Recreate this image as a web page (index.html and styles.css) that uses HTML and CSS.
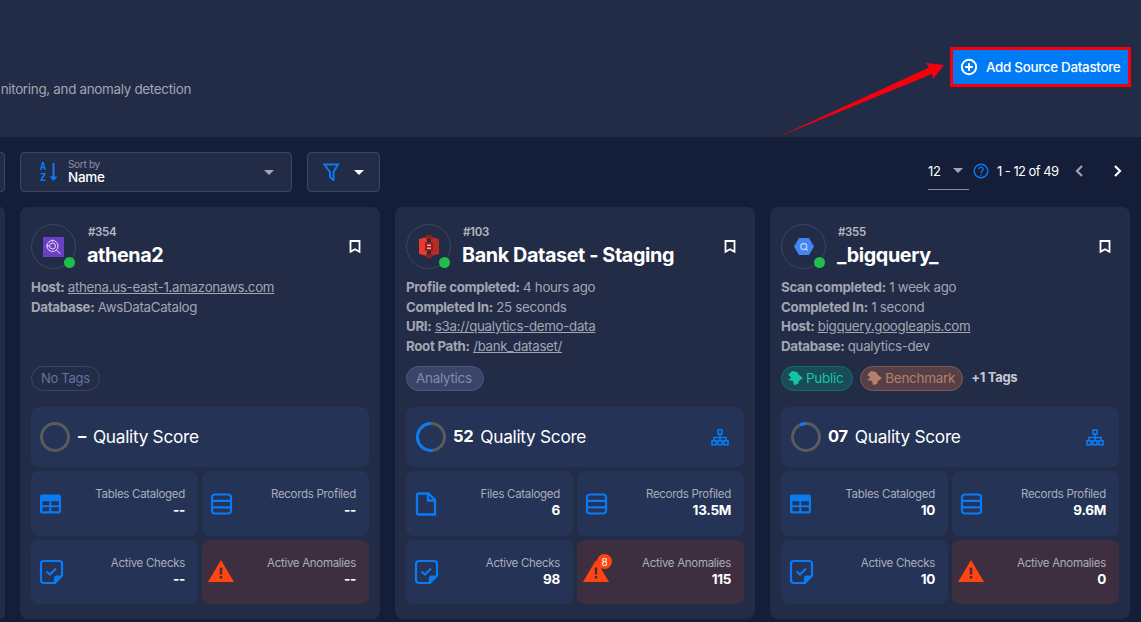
FILE: index.html
```html
<!DOCTYPE html>
<html>
  <head>
    <title>Source Datastores</title>
    <link rel="stylesheet" href="styles.css">
  </head>
  <body>
    <header class="top">
      <p class="intro">nitoring, and anomaly detection</p>
      <button class="add-btn">
        <svg width="18" height="18" viewBox="0 0 18 18" fill="none" stroke="#fff" stroke-width="2"><circle cx="9" cy="9" r="7.2"/><path d="M9 5.200v7.600M5.200 9h7.600"/></svg>
        Add Source Datastore
      </button>
    </header>

    <!-- annotation drawn on top of the screenshot -->
    <svg class="arrow" width="180" height="90" viewBox="770 55 180 90"><path d="M778 137L929 67.500L926 63L944 65L933 79L932 74Z" fill="#f5000b"/></svg>

    <section class="toolbar">
      <div class="stub"></div>
      <div class="sort">
        <svg width="22" height="22" viewBox="0 0 22 22">
          <text x="0" y="9" class="az">A</text>
          <text x="0" y="20" class="az">Z</text>
          <path d="M13.500 2v16" stroke="#0a7bf2" stroke-width="2"/>
          <path d="M9.500 15.500h8l-4 4.500z" fill="#0a7bf2"/>
        </svg>
        <div class="sort-text">
          <small>Sort by</small>
          <b>Name</b>
        </div>
        <i class="caret grey"></i>
      </div>
      <div class="filter">
        <svg width="18" height="18" viewBox="0 0 18 18" fill="none" stroke="#0a7bf2" stroke-width="2"><path d="M1.500 1.500h13.500L10.500 9v8L7 14V9z"/></svg>
        <i class="caret"></i>
      </div>
      <div class="pager">
        <div class="per-page"><span>12</span><i class="caret grey"></i></div>
        <svg class="help" width="16" height="16" viewBox="0 0 16 16" fill="none" stroke="#0a7bf2" stroke-width="1.400"><circle cx="8" cy="8" r="6.800"/><path d="M5.900 6.300a2.100 2.100 0 1 1 3.300 1.700C8.400 8.600 8 9 8 10M8 11.200v1.200"/></svg>
        <span class="range">1 - 12 of 49</span>
        <svg class="prev" width="10" height="14" viewBox="0 0 10 14" fill="none" stroke="#9ea3b0" stroke-width="2.200"><path d="M8 2L3 7l5 5"/></svg>
        <svg class="next" width="10" height="14" viewBox="0 0 10 14" fill="none" stroke="#fff" stroke-width="2.200"><path d="M2 2l5 5-5 5"/></svg>
      </div>
    </section>

    <main class="cards">
      <div class="stub-card"></div>

      <article class="card">
        <div class="card-head">
          <div class="logo">
            <svg width="21" height="20" viewBox="0 0 21 20"><rect width="21" height="20" fill="#6b3fc4"/><g fill="none" stroke="#e4dcf7" stroke-width="1"><circle cx="9.500" cy="9" r="5.500"/><circle cx="9.500" cy="9" r="3"/><path d="M13.500 13l4 4"/><path d="M3 9h3M9.500 2.500v2"/></g></svg>
            <span class="dot"></span>
          </div>
          <div class="names">
            <span class="num">#354</span>
            <h2>athena2</h2>
          </div>
          <svg class="mark" width="12" height="13" viewBox="0 0 12 13" fill="none" stroke="#fff" stroke-width="1.800"><path d="M1.500 1h9v10.800L6 9.300l-4.500 2.500z"/></svg>
        </div>
        <div class="details">
          <p><b>Host:</b> <u>athena.us-east-1.amazonaws.com</u></p>
          <p><b>Database:</b> AwsDataCatalog</p>
        </div>
        <div class="tags"><span class="tag none">No Tags</span></div>
        <div class="score empty">
          <svg class="ring" width="30" height="30" viewBox="0 0 30 30" fill="none" stroke-width="3"><circle cx="15" cy="15" r="13.500" stroke="#5b5b5b"/></svg>
          <b>–</b>
          <span>Quality Score</span>
        </div>
        <div class="stats">
          <div class="stat">
            <svg width="26" height="26" viewBox="0 0 26 26"><path fill="#0a7bf2" fill-rule="evenodd" d="M3 3.500h17a2 2 0 0 1 2 2v15a2 2 0 0 1-2 2H3a2 2 0 0 1-2-2v-15a2 2 0 0 1 2-2zM3.500 10.200v4h6.800v-4zm8.800 0v4h7.500v-4zm-8.800 6v4h6.800v-4zm8.800 0v4h7.500v-4z"/></svg>
            <div class="stat-text"><span>Tables Cataloged</span><b>--</b></div>
          </div>
          <div class="stat">
            <svg width="26" height="26" viewBox="0 0 26 26" fill="none" stroke="#0a7bf2" stroke-width="2.200"><rect x="2" y="3.500" width="19" height="19" rx="3"/><path d="M2 9.800h19M2 16.300h19"/></svg>
            <div class="stat-text"><span>Records Profiled</span><b>--</b></div>
          </div>
          <div class="stat">
            <svg width="26" height="26" viewBox="0 0 26 26" fill="none" stroke="#0a7bf2" stroke-width="2.200"><path d="M5 2h15a3 3 0 0 1 3 3v11.500L16 24H5a3 3 0 0 1-3-3V5a3 3 0 0 1 3-3z"/><path d="M7.500 12.500l3.500 3 6-6"/><path d="M16 24v-4.500a2 2 0 0 1 2-2h5" fill="#0a7bf2"/></svg>
            <div class="stat-text"><span>Active Checks</span><b>--</b></div>
          </div>
          <div class="stat alert">
            <svg width="26" height="26" viewBox="0 0 26 26"><path fill="#ff4512" d="M13 1l13 22H0z"/><path fill="#3e2f40" d="M11.800 8.500h2.400v7h-2.400zM11.800 17h2.400v2.500h-2.400z"/></svg>
            <div class="stat-text"><span>Active Anomalies</span><b>--</b></div>
          </div>
        </div>
      </article>

      <article class="card">
        <div class="card-head">
          <div class="logo">
            <svg width="20" height="23" viewBox="0 0 20 23"><path fill="#e7392c" d="M0 4l8-2v19l-8-2z"/><path fill="#b92a20" d="M20 4l-8-2v19l8-2z"/><path fill="#8e2119" d="M7 0h6v4H7zM7 19h6v4H7z"/><path fill="#8e2119" d="M6 7h8v9H6z"/><path fill="#f4a59c" d="M8 9.500h4v1.500H8zM8 12.500h4V14H8z"/></svg>
            <span class="dot"></span>
          </div>
          <div class="names">
            <span class="num">#103</span>
            <h2>Bank Dataset - Staging</h2>
          </div>
          <svg class="mark" width="12" height="13" viewBox="0 0 12 13" fill="none" stroke="#fff" stroke-width="1.800"><path d="M1.500 1h9v10.800L6 9.300l-4.500 2.500z"/></svg>
        </div>
        <div class="details">
          <p><b>Profile completed:</b> 4 hours ago</p>
          <p><b>Completed In:</b> 25 seconds</p>
          <p><b>URI:</b> <u>s3a://qualytics-demo-data</u></p>
          <p><b>Root Path:</b> <u>/bank_dataset/</u></p>
        </div>
        <div class="tags"><span class="tag analytics">Analytics</span></div>
        <div class="score">
          <svg class="ring" width="30" height="30" viewBox="0 0 30 30" fill="none" stroke-width="3"><circle cx="15" cy="15" r="13.500" stroke="#5b5b5b"/><circle class="ring-val" cx="15" cy="15" r="13.500" stroke="#0a7bf2" pathLength="100" stroke-dasharray="52 100"/></svg>
          <b>52</b>
          <span>Quality Score</span>
          <svg class="tree" width="18" height="17" viewBox="0 0 18 17" fill="none" stroke="#0a7bf2" stroke-width="1.600"><path d="M9 5v3.500M3 11.500V8.500h12v3M9 8.500v3"/><rect x="7" y="1" width="4" height="4"/><rect x="1" y="11.800" width="4" height="4"/><rect x="7" y="11.800" width="4" height="4"/><rect x="13" y="11.800" width="4" height="4"/></svg>
        </div>
        <div class="stats">
          <div class="stat">
            <svg width="26" height="26" viewBox="0 0 26 26" fill="none" stroke="#0a7bf2" stroke-width="2.300"><path d="M4 2.500h10.500L21 9v14.500H4a1 1 0 0 1-1-1v-19a1 1 0 0 1 1-1z"/><path d="M14 2.500V9.500h7"/></svg>
            <div class="stat-text"><span>Files Cataloged</span><b>6</b></div>
          </div>
          <div class="stat">
            <svg width="26" height="26" viewBox="0 0 26 26" fill="none" stroke="#0a7bf2" stroke-width="2.200"><rect x="2" y="3.500" width="19" height="19" rx="3"/><path d="M2 9.800h19M2 16.300h19"/></svg>
            <div class="stat-text"><span>Records Profiled</span><b>13.5M</b></div>
          </div>
          <div class="stat">
            <svg width="26" height="26" viewBox="0 0 26 26" fill="none" stroke="#0a7bf2" stroke-width="2.200"><path d="M5 2h15a3 3 0 0 1 3 3v11.500L16 24H5a3 3 0 0 1-3-3V5a3 3 0 0 1 3-3z"/><path d="M7.500 12.500l3.500 3 6-6"/><path d="M16 24v-4.500a2 2 0 0 1 2-2h5" fill="#0a7bf2"/></svg>
            <div class="stat-text"><span>Active Checks</span><b>98</b></div>
          </div>
          <div class="stat alert">
            <svg width="26" height="26" viewBox="0 0 26 26"><path fill="#ff4512" d="M13 1l13 22H0z"/><path fill="#3e2f40" d="M11.800 8.500h2.400v7h-2.400zM11.800 17h2.400v2.500h-2.400z"/></svg>
            <span class="badge">8</span>
            <div class="stat-text"><span>Active Anomalies</span><b>115</b></div>
          </div>
        </div>
      </article>

      <article class="card">
        <div class="card-head">
          <div class="logo">
            <svg width="20" height="17" viewBox="0 0 20 17"><path fill="#4285f4" d="M5 0h10l5 8.500L15 17H5L0 8.500z"/><circle cx="9.800" cy="8.500" r="3" fill="none" stroke="#b5cdfb" stroke-width="1.300"/><path d="M11.800 10.500l2 2" stroke="#b5cdfb" stroke-width="1.300"/></svg>
            <span class="dot"></span>
          </div>
          <div class="names">
            <span class="num">#355</span>
            <h2>_bigquery_</h2>
          </div>
          <svg class="mark" width="12" height="13" viewBox="0 0 12 13" fill="none" stroke="#fff" stroke-width="1.800"><path d="M1.500 1h9v10.800L6 9.300l-4.500 2.500z"/></svg>
        </div>
        <div class="details">
          <p><b>Scan completed:</b> 1 week ago</p>
          <p><b>Completed In:</b> 1 second</p>
          <p><b>Host:</b> <u>bigquery.googleapis.com</u></p>
          <p><b>Database:</b> qualytics-dev</p>
        </div>
        <div class="tags">
          <span class="tag public">
            <svg width="17" height="17" viewBox="0 0 17 17" fill="#17c3a0"><path d="M5 1l5 1 2 3 4 3-4 3-1 3-4 1-1-4-5-1 3-2-1-2-2-1z"/></svg>
            Public
          </span>
          <span class="tag bench">
            <svg width="17" height="17" viewBox="0 0 17 17" fill="#b57f69"><path d="M5 1l5 1 2 3 4 3-4 3-1 3-4 1-1-4-5-1 3-2-1-2-2-1z"/></svg>
            Benchmark
          </span>
          <span class="more">+1 Tags</span>
        </div>
        <div class="score">
          <svg class="ring" width="30" height="30" viewBox="0 0 30 30" fill="none" stroke-width="3"><circle cx="15" cy="15" r="13.500" stroke="#5b5b5b"/><circle class="ring-val" cx="15" cy="15" r="13.500" stroke="#0a7bf2" pathLength="100" stroke-dasharray="7 100"/></svg>
          <b>07</b>
          <span>Quality Score</span>
          <svg class="tree" width="18" height="17" viewBox="0 0 18 17" fill="none" stroke="#0a7bf2" stroke-width="1.600"><path d="M9 5v3.500M3 11.500V8.500h12v3M9 8.500v3"/><rect x="7" y="1" width="4" height="4"/><rect x="1" y="11.800" width="4" height="4"/><rect x="7" y="11.800" width="4" height="4"/><rect x="13" y="11.800" width="4" height="4"/></svg>
        </div>
        <div class="stats">
          <div class="stat">
            <svg width="26" height="26" viewBox="0 0 26 26"><path fill="#0a7bf2" fill-rule="evenodd" d="M3 3.500h17a2 2 0 0 1 2 2v15a2 2 0 0 1-2 2H3a2 2 0 0 1-2-2v-15a2 2 0 0 1 2-2zM3.500 10.200v4h6.800v-4zm8.800 0v4h7.500v-4zm-8.800 6v4h6.800v-4zm8.800 0v4h7.500v-4z"/></svg>
            <div class="stat-text"><span>Tables Cataloged</span><b>10</b></div>
          </div>
          <div class="stat">
            <svg width="26" height="26" viewBox="0 0 26 26" fill="none" stroke="#0a7bf2" stroke-width="2.200"><rect x="2" y="3.500" width="19" height="19" rx="3"/><path d="M2 9.800h19M2 16.300h19"/></svg>
            <div class="stat-text"><span>Records Profiled</span><b>9.6M</b></div>
          </div>
          <div class="stat">
            <svg width="26" height="26" viewBox="0 0 26 26" fill="none" stroke="#0a7bf2" stroke-width="2.200"><path d="M5 2h15a3 3 0 0 1 3 3v11.500L16 24H5a3 3 0 0 1-3-3V5a3 3 0 0 1 3-3z"/><path d="M7.500 12.500l3.500 3 6-6"/><path d="M16 24v-4.500a2 2 0 0 1 2-2h5" fill="#0a7bf2"/></svg>
            <div class="stat-text"><span>Active Checks</span><b>10</b></div>
          </div>
          <div class="stat alert">
            <svg width="26" height="26" viewBox="0 0 26 26"><path fill="#ff4512" d="M13 1l13 22H0z"/><path fill="#3e2f40" d="M11.800 8.500h2.400v7h-2.400zM11.800 17h2.400v2.500h-2.400z"/></svg>
            <div class="stat-text"><span>Active Anomalies</span><b>0</b></div>
          </div>
        </div>
      </article>
    </main>
  </body>
</html>
```

FILE: styles.css
```css
* {
  box-sizing: border-box;
}
html,
body {
  margin: 0;
  height: 622px;
  overflow: hidden;
}
body {
  position: relative;
  background-color: #151e38;
  font-family: Inter, "Noto Sans", sans-serif;
  color: #fff;
  letter-spacing: -0.3px;
}
p,
h2 {
  margin: 0;
}

/* top banner */
.top {
  height: 137px;
  background-color: #232c47;
  padding: 47px 10px 0 0;
  display: flex;
  justify-content: space-between;
  align-items: flex-start;
}
.intro {
  width: 191px;
  margin-top: 33px;
  text-align: right;
  white-space: nowrap;
  font-size: 13.400px;
  line-height: 19px;
  color: #a2a6b3;
}
.add-btn {
  width: 181px;
  height: 40px;
  display: flex;
  align-items: center;
  gap: 8px;
  padding: 0 0 0 7px;
  background-color: #007bf5;
  border: 3px solid #f5000b;
  color: #fff;
  font-family: inherit;
  font-size: 13.400px;
  font-weight: 500;
  letter-spacing: -0.3px;
  white-space: nowrap;
}
.arrow {
  position: absolute;
  left: 770px;
  top: 55px;
}

/* toolbar */
.toolbar {
  height: 70px;
  padding-top: 15px;
  display: flex;
  align-items: flex-start;
}
.stub,
.sort,
.filter {
  height: 40px;
  background-color: #232c47;
  border: 1px solid #3b4462;
  border-radius: 4px;
}
.stub {
  width: 5px;
  border-left: 0;
  border-radius: 0 4px 4px 0;
}
.sort {
  width: 272px;
  margin-left: 15px;
  padding: 0 17px 0 19px;
  display: flex;
  align-items: center;
}
.sort-text {
  flex: 1;
  margin-left: 6px;
  display: flex;
  flex-direction: column;
}
.sort-text small {
  font-size: 10px;
  line-height: 11px;
  color: #8b90a0;
}
.sort-text b {
  font-size: 13.500px;
  line-height: 15px;
  font-weight: 500;
}
.az {
  font-size: 10px;
  font-weight: 700;
  fill: #0a7bf2;
  font-family: "DejaVu Sans Mono", monospace;
}
.caret {
  display: block;
  width: 0;
  height: 0;
  border-left: 5.500px solid transparent;
  border-right: 5.500px solid transparent;
  border-top: 5.500px solid #fff;
}
.caret.grey {
  border-top-color: #a2a6b3;
}
.filter {
  width: 73px;
  margin-left: 15px;
  padding-left: 15px;
  display: flex;
  align-items: center;
  gap: 13px;
}
.pager {
  margin-left: auto;
  padding-right: 18px;
  display: flex;
  align-items: center;
  height: 38px;
  font-size: 13px;
}
.per-page {
  width: 41px;
  height: 38px;
  border-bottom: 1px solid #8b90a0;
  display: flex;
  align-items: center;
  justify-content: space-between;
  padding-right: 6px;
}
.help {
  margin-left: 4px;
}
.range {
  margin-left: 8px;
  width: 66px;
  white-space: nowrap;
  letter-spacing: -0.55px;
}
.prev {
  margin-left: 11px;
}
.next {
  margin-left: 29px;
}

/* cards */
.cards {
  display: grid;
  grid-template-columns: 5px 360px 360px 360px;
  gap: 15px;
  height: 412px;
}
.stub-card {
  background-color: #232c47;
  border-radius: 0 8px 8px 0;
}
.card {
  background-color: #232c47;
  border-radius: 8px;
  padding: 17px 11px 14px;
  display: flex;
  flex-direction: column;
}
.card-head {
  height: 45px;
  display: flex;
  align-items: flex-start;
}
.logo {
  position: relative;
  width: 45px;
  height: 45px;
  border: 1px solid #3b4462;
  border-radius: 50%;
  display: flex;
  align-items: center;
  justify-content: center;
  flex-shrink: 0;
}
.dot {
  position: absolute;
  right: 0;
  bottom: 0;
  width: 11px;
  height: 11px;
  background-color: #1fbe4c;
  border-radius: 50%;
}
.names {
  flex: 1;
  margin-left: 11px;
  display: flex;
  flex-direction: column;
}
.num {
  padding: 1px 0 0 1px;
  font-size: 11.500px;
  line-height: 14px;
  font-weight: 600;
  color: #b5b8c3;
}
.names h2 {
  margin-top: 4px;
  font-size: 19.800px;
  line-height: 25px;
  font-weight: 700;
  letter-spacing: -0.4px;
}
.mark {
  margin: 16px 8px 0 0;
}
.details {
  height: 89px;
  margin-top: 8px;
  padding-top: 1px;
  font-size: 13.300px;
  line-height: 19.500px;
  color: #a2a6b3;
}
.details b {
  font-weight: 700;
}
.tags {
  height: 25px;
  display: flex;
  align-items: center;
  gap: 7px;
}
.tag {
  height: 25px;
  padding: 0 9px 1px;
  border: 1px solid #3b4462;
  border-radius: 13px;
  display: flex;
  align-items: center;
  font-size: 13.500px;
  color: #66739f;
}
.tag.none {
  font-size: 13px;
}
.tag.analytics {
  padding: 0 11px 1px 9px;
  background-color: #3a4468;
  border-color: #4d5780;
  color: #7f8bb5;
}
.tag.public {
  padding: 0 9px 1px 5px;
  gap: 2px;
  background-color: #174c58;
  border-color: #136c68;
  color: #17c3a0;
}
.tag.bench {
  padding: 0 7px 1px 5px;
  gap: 2px;
  background-color: #573f48;
  border-color: #7d5a54;
  color: #b57f69;
}
.more {
  margin: 0 0 3px 1px;
  font-size: 13px;
  font-weight: 700;
  color: #c7c9d2;
}
.score {
  height: 60px;
  margin-top: 16px;
  padding: 0 15px 2px 10px;
  background-color: #243356;
  border-radius: 8px;
  display: flex;
  align-items: center;
  font-size: 17.300px;
}
.score.empty {
  padding-left: 9px;
}
.score.empty b {
  margin-left: 8px;
}
.score b {
  margin-left: 7px;
  font-size: 16.500px;
  font-weight: 700;
}
.score span {
  margin-left: 7px;
  flex: 1;
}
.ring,
.tree {
  margin-top: 2px;
}
.ring-val {
  transform-origin: center;
  transform: scaleX(-1) rotate(-90deg);
}
.stats {
  margin-top: 4px;
  display: grid;
  grid-template-columns: 167px 167px;
  grid-template-rows: 65px 64px;
  gap: 4px;
}
.stat {
  position: relative;
  padding: 0 13px 0 8px;
  background-color: #243356;
  border-radius: 8px;
  display: flex;
  align-items: center;
}
.stat.alert {
  background-color: #3e2f40;
  padding-left: 6px;
}
.stat-text {
  flex: 1;
  padding-bottom: 2px;
  display: flex;
  flex-direction: column;
  align-items: flex-end;
  white-space: nowrap;
}
.stat-text span {
  font-size: 11.500px;
  line-height: 16px;
  color: #a9adbc;
}
.stat-text b {
  font-size: 13.500px;
  line-height: 17px;
  font-weight: 700;
}
.badge {
  position: absolute;
  left: 20px;
  top: 14px;
  width: 15px;
  height: 15px;
  background-color: #ff4512;
  border-radius: 50%;
  display: flex;
  align-items: center;
  justify-content: center;
  font-size: 10px;
}
```
